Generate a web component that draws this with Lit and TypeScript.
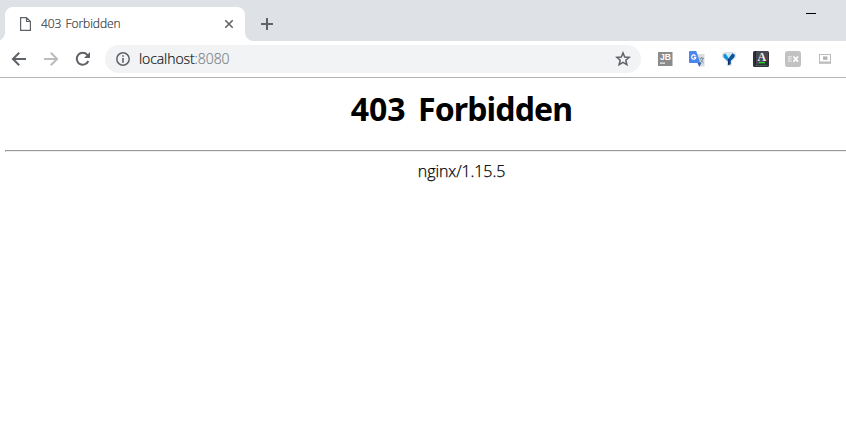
import { LitElement, html, css } from "lit";
import { customElement } from "lit/decorators.js";

@customElement("browser-tabs")
class BrowserTabs extends LitElement {
  static styles = css`
    :host { display: flex; height: 41px; background: #dee1e6; box-sizing: border-box; padding: 7px 30px 0 5px; align-items: flex-start; }
    .tab { position: relative; width: 240px; height: 34px; box-sizing: border-box; background: #fff; border-radius: 8px 8px 0 0; display: flex; align-items: center; padding: 0 11px 0 15px; }
    .tab::before, .tab::after { content: ""; position: absolute; bottom: 0; width: 8px; height: 8px; }
    .tab::before { left: -8px; background: radial-gradient(circle at 0 0, transparent 7.5px, #fff 8px); }
    .tab::after { right: -8px; background: radial-gradient(circle at 100% 0, transparent 7.5px, #fff 8px); }
    .title { flex: 1; margin-left: 10px; font: 300 12px/16px "Open Sans", "Noto Sans", sans-serif; color: #33373b; -webkit-text-stroke: 0.2px; letter-spacing: -0.05px; word-spacing: 1px; white-space: nowrap; }
    .plus { margin: 10px 0 0 15px; }
    .min { width: 10px; height: 1px; background: #000; margin: 6px 0 0 auto; }
    svg { display: block; flex: none; }
  `;
  render() {
    return html`
      <div class="tab">
        <svg width="11" height="14" viewBox="0 0 11 14" fill="none" stroke="#5f6368" stroke-width="1.2"><path d="M.6.6H6.500L10.400 4.500V13.400H.6ZM6.500 .6V4.500H10.400"/></svg>
        <span class="title">403 Forbidden</span>
        <svg width="10" height="10" viewBox="0 0 10 10" stroke="#5f6368" stroke-width="1.6"><path d="M1.300 1.300L8.700 8.700M8.700 1.300L1.300 8.700"/></svg>
      </div>
      <svg class="plus" width="14" height="14" viewBox="0 0 14 14" stroke="#5f6368" stroke-width="2"><path d="M7 1V13M1 7H13"/></svg>
      <div class="min"></div>`;
  }
}

@customElement("browser-toolbar")
class BrowserToolbar extends LitElement {
  static styles = css`
    :host { display: flex; height: 37px; box-sizing: border-box; background: #fff; border-bottom: 1px solid #b3b4b6; align-items: center; padding: 0 13px 0 11px; }
    svg { display: block; flex: none; }
    .nav { display: flex; gap: 16px; }
    .bar { display: flex; align-items: center; width: 536px; height: 28px; border-radius: 14px; background: #f1f3f4; margin-left: 14px; box-sizing: border-box; padding: 0 10px; }
    .url { flex: 1; margin-left: 8px; font: 300 14px/20px "Open Sans", "Noto Sans", sans-serif; letter-spacing: -0.08px; color: #101214; -webkit-text-stroke: 0.2px; white-space: nowrap; }
    .port { color: #80868b; }
    .ext { display: flex; gap: 16px; margin-left: 16px; }
    .bold { font: bold 9px "Liberation Sans", sans-serif; }
    .serif { font: bold 12px "Liberation Serif", serif; }
  `;
  render() {
    return html`
      <div class="nav">
        <svg width="16" height="16" viewBox="0 0 16 16" fill="none" stroke="#5f6368" stroke-width="2"><path d="M15 8H2.200M8.200 1.700L1.900 8L8.200 14.300"/></svg>
        <svg width="16" height="16" viewBox="0 0 16 16" fill="none" stroke="#babcbe" stroke-width="2"><path d="M1 8H13.800M7.800 1.700L14.100 8L7.800 14.300"/></svg>
        <svg width="16" height="16" viewBox="0 0 16 16"><path d="M13.300 10A6 6 0 1 1 12.300 3.800L13.500 5" fill="none" stroke="#5f6368" stroke-width="2"/><path d="M15 1V7H9Z" fill="#5f6368"/></svg>
      </div>
      <div class="bar">
        <svg width="16" height="16" viewBox="0 0 16 16"><circle cx="8" cy="8" r="6.200" fill="none" stroke="#5f6368" stroke-width="1.500"/><path d="M7.200 4.200H8.800V5.800H7.200ZM7.200 7H8.800V11.800H7.200Z" fill="#5f6368"/></svg>
        <span class="url">localhost<span class="port">:8080</span></span>
        <svg width="16" height="16" viewBox="0 0 16 16" fill="none" stroke="#5f6368" stroke-width="1.500"><path d="M8 1.900L9.700 6L14.200 6.400L10.800 9.300L11.900 13.700L8 11.300L4.100 13.700L5.200 9.300L1.800 6.400L6.300 6Z"/></svg>
      </div>
      <div class="ext">
        <svg width="16" height="16" viewBox="0 0 16 16"><rect x="1" y="1" width="14.500" height="14" fill="#8b8b8b"/><text class="bold" x="3" y="8.800" fill="#fff" textLength="11" lengthAdjust="spacingAndGlyphs">JB</text><path d="M3 11.500H8V12.800H3Z" fill="#e8e8e8"/></svg>
        <svg width="16" height="16" viewBox="0 0 16 16"><path d="M7 3H15.500V15.500H10Z" fill="#dcdcdc"/><path d="M8.500 12H12.500L10.300 15.700Z" fill="#3167c4"/><path d="M1 0H7.200L11.300 12H1Q0 12 0 11V1Q0 0 1 0Z" fill="#4a86ee"/><path d="M6.400 4.800A2.100 2.100 0 1 0 6.800 6.400H5" fill="none" stroke="#fff" stroke-width="1.200"/><path d="M10.300 7.300H15M12.600 6V7.300M14 7.500Q13.500 10.500 11 12M11.500 8.700Q12.800 11 14.600 12" fill="none" stroke="#7893a7"/></svg>
        <svg width="16" height="16" viewBox="0 0 16 16"><path d="M2.300 2.500L5.500 1.800H10.500L13.700 2.500L14.300 5.500L9.800 10.200V14.200H6.500V10.200L1.700 5.500Z" fill="#fff" stroke="#d9dde0" stroke-width="1.500"/><path d="M2.200 3.700L4.500 2.500L8 7.500L7.300 10.800L2.800 6.500Z" fill="#1590dd"/><path d="M5 2.700Q8 1.700 10.800 2.700L8.200 7.600Z" fill="#bde9fb"/><path d="M11.300 2.300L13.900 4L13.200 6.500L9.800 9.800V13.200L7 14V8.300Z" fill="#0756a6"/><path d="M7 8.500L8.400 7.500V13.600L7 14Z" fill="#082f68"/></svg>
        <svg width="16" height="16" viewBox="0 0 16 16"><rect width="16" height="16" rx="1.500" fill="#30303b"/><path d="M3 0H15V9L3 14Z" fill="#484853"/><path d="M2.500 0V16" stroke="#22222a"/><text class="serif" x="4.600" y="9.800" fill="#eee">A</text><path d="M6 11H12V12.300H6Z" fill="#20df21"/><path d="M2 14.500H14" stroke="#4d7755" stroke-width=".7"/></svg>
        <svg width="16" height="16" viewBox="0 0 16 16"><rect width="16" height="16" rx="2.500" fill="#c2c2c2"/><path d="M3 5H7V6.400H4.800V7.400H6.800V8.700H4.800V9.800H7V11H3Z" fill="#dedede"/><path d="M8.500 5.500L13 10.700M13 5.500L8.500 10.700" stroke="#fff" stroke-width="1.800"/></svg>
        <svg width="16" height="16" viewBox="0 0 16 16"><rect x="2.500" y="3.500" width="11" height="8.500" fill="#fff" stroke="#bdbdbd"/><path d="M2 10.500H14V12.700H2Z" fill="#bdbdbd"/><rect x="6" y="5.300" width="4.500" height="3.500" fill="#c2c2c2"/><path d="M7 8.500V6.300L9.300 8.500V6.300" fill="none" stroke="#999" stroke-width=".6"/></svg>
      </div>`;
  }
}

@customElement("app-root")
class AppRoot extends LitElement {
  static styles = css`
    :host { display: block; height: 444px; background: #fff; overflow: hidden; }
    .page { width: 913px; margin-left: 5px; font-family: "Noto Sans", sans-serif; color: #000; text-align: center; }
    h1 { margin: 0; padding-top: 9px; font-size: 32px; line-height: 43px; font-weight: 700; word-spacing: 4px; }
    .word { letter-spacing: -0.85px; }
    hr { margin: 20px 0 0; border: 1px solid; border-color: #9a9a9a #eee #eee #9a9a9a; }
    .server { font: 300 16px/21px "Open Sans", "Noto Sans", sans-serif; margin-top: 9px; letter-spacing: -0.08px; -webkit-text-stroke: 0.25px; }
  `;
  render() {
    return html`
      <browser-tabs></browser-tabs>
      <browser-toolbar></browser-toolbar>
      <div class="page">
        <h1>403 <span class="word">Forbidden</span></h1>
        <hr />
        <div class="server">nginx/1.15.5</div>
      </div>`;
  }
}
